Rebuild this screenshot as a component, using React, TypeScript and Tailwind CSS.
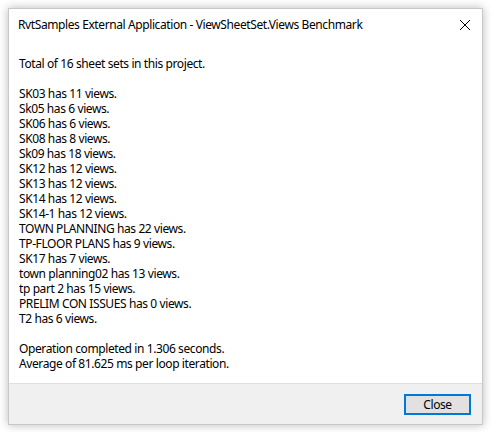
import React from "react";

const text = [
  "Total of 16 sheet sets in this project.",
  "",
  "SK03 has 11 views.",
  "Sk05 has 6 views.",
  "SK06 has 6 views.",
  "SK08 has 8 views.",
  "Sk09 has 18 views.",
  "SK12 has 12 views.",
  "SK13 has 12 views.",
  "SK14 has 12 views.",
  "SK14-1 has 12 views.",
  "TOWN PLANNING has 22 views.",
  "TP-FLOOR PLANS has 9 views.",
  "SK17 has 7 views.",
  "town planning02 has 13 views.",
  "tp part 2 has 15 views.",
  "PRELIM CON ISSUES has 0 views.",
  "T2 has 6 views.",
  "",
  "Operation completed in 1.306 seconds.",
  "Average of 81.625 ms per loop iteration.",
].join("\n");

export default function App() {
  return (
    <div
      className="w-[491px] h-[432px] bg-white pl-[8px] pt-[8px] overflow-hidden tracking-[-0.4px]"
      style={{ fontFamily: '"Noto Sans", "Open Sans", sans-serif' }}
    >
      <div className="w-[475px] h-[417px] bg-white border border-[#c8c8c8] shadow-[0_0_9px_rgba(0,0,0,0.28)] flex flex-col">
        <div className="h-[31px] flex items-center justify-between pl-[9px] pr-[10px] shrink-0">
          <span className="text-[12px] text-black leading-none">
            RvtSamples External Application - ViewSheetSet.Views Benchmark
          </span>
          <svg width="12" height="12" viewBox="0 0 12 12" className="mr-[1px]">
            <path d="M1 1 L11 11 M11 1 L1 11" stroke="#000" strokeWidth="1" fill="none" />
          </svg>
        </div>
        <div className="flex-1 pt-[16px] pl-[10px]">
          <p className="text-[12px] leading-[15px] text-black whitespace-pre">{text}</p>
        </div>
        <div className="h-[41px] shrink-0 bg-[#f0f0f0] border-t border-[#dfdfdf] flex justify-end pt-[10px] pr-[11px]">
          <button className="w-[67px] h-[21px] border-2 border-[#0078d7] bg-[#e1e1e1] text-[12px] text-black flex items-center justify-center leading-none">
            Close
          </button>
        </div>
      </div>
    </div>
  );
}
